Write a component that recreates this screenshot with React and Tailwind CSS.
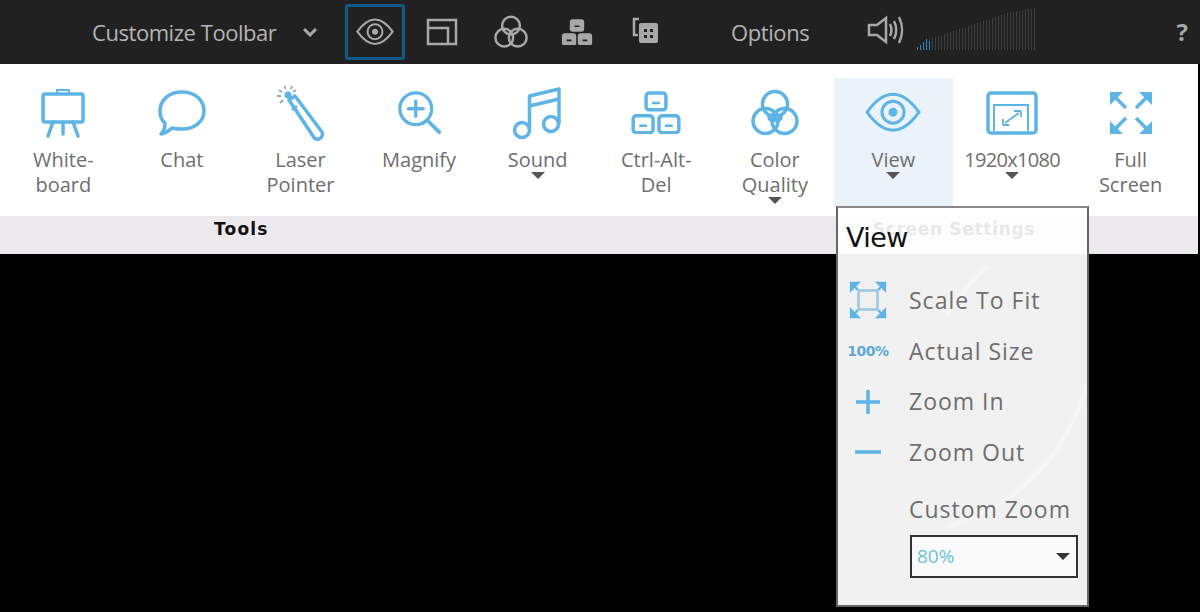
import React from 'react';

const blue = '#5fb4e6';

const Eye = ({ color, size = 56 }) => (
  <svg width={size} height={size * 0.72} viewBox="0 0 56 40" fill="none" stroke={color} strokeWidth="3">
    <path d="M2 20 C12 6 20 2 28 2 C36 2 44 6 54 20 C44 34 36 38 28 38 C20 38 12 34 2 20 Z" />
    <circle cx="28" cy="20" r="11" />
    <circle cx="28" cy="20" r="4.5" fill={color} stroke="none" />
  </svg>
);

const Circles = ({ color, size = 48, fill }) => (
  <svg width={size} height={size} viewBox="0 0 48 48" fill="none" stroke={color} strokeWidth="3.5">
    {fill && <path d="M24 22 L32 27 L31 31 C27 34 21 34 17 31 L16 27 Z" fill={color} stroke="none" />}
    <circle cx="24" cy="15" r="12.5" />
    <circle cx="14.5" cy="32" r="12.5" />
    <circle cx="33.5" cy="32" r="12.5" />
  </svg>
);

const Keys = ({ color, w = 52, solid }) => (
  <svg width={w} height={w * 0.84} viewBox="0 0 52 44" fill={solid ? color : 'none'} stroke={color} strokeWidth="3.5">
    <rect x="16" y="2" width="20" height="17" rx="3" />
    <rect x="3" y="25" width="20" height="17" rx="3" />
    <rect x="29" y="25" width="20" height="17" rx="3" />
    <path d="M22 12h8M9 35h8M35 35h8" stroke={solid ? '#212121' : color} strokeWidth="2.5" />
  </svg>
);

const Whiteboard = () => (
  <svg width="46" height="50" viewBox="0 0 46 50" fill="none" stroke={blue} strokeWidth="3.5" strokeLinecap="round" strokeLinejoin="round">
    <path d="M17 5V2h12v3" strokeWidth="2" />
    <rect x="3" y="6" width="40" height="28" rx="2" />
    <path d="M13 34 L8 48M33 34 L38 48M23 34V46" />
  </svg>
);

const Chat = () => (
  <svg width="50" height="48" viewBox="0 0 50 48" fill="none" stroke={blue} strokeWidth="3.5" strokeLinejoin="round">
    <path d="M25 3 C38 3 47 11 47 22 C47 33 37 40 25 40 C21 40 18 40 15 39 C12 42 8 44 4 45 C7 42 8 38 8 34 C4 31 3 27 3 22 C3 11 12 3 25 3 Z" />
  </svg>
);

const Laser = () => (
  <svg width="50" height="56" viewBox="0 0 50 56" fill="none" stroke={blue} strokeWidth="3.5" strokeLinejoin="round">
    <path d="M14 15 L20 11 L47 47 C48 50 47 53 44 54 C41 55 39 53 38 51 Z" />
    <path d="M22 21 L17 25" strokeWidth="2.5" />
    <circle cx="13" cy="10" r="3.5" fill={blue} stroke="none" />
    <path d="M10 1v3M17 1l-1 3M4 5l3 2M2 11h4M5 18l3-3M21 5l-3 2" stroke="#9aa5ad" strokeWidth="1.8" />
  </svg>
);

const Magnify = () => (
  <svg width="45" height="45" viewBox="0 0 48 48" fill="none" stroke={blue} strokeWidth="3.5" strokeLinecap="round">
    <circle cx="20" cy="20" r="17" />
    <path d="M20 12v16M12 20h16" />
    <path d="M32 32 L45 45" strokeWidth="4" />
  </svg>
);

const Music = () => (
  <svg width="52" height="54" viewBox="0 0 52 54" fill="none" stroke={blue} strokeWidth="3.5" strokeLinejoin="round">
    <circle cx="10" cy="44" r="7.5" />
    <circle cx="39" cy="38" r="7.5" />
    <path d="M17.5 44 V10 L47 3 V38" />
    <path d="M17.5 20 L47 13" />
  </svg>
);

const Resolution = () => (
  <svg width="52" height="44" viewBox="0 0 52 44" fill="none" stroke={blue} strokeWidth="3.5">
    <rect x="2" y="2" width="48" height="40" rx="3" />
    <path d="M8 40V14h34v26" strokeWidth="2" />
    <path d="M17 34h6M17 34v-6M35 20h-7M35 20v6M19 32l14-10" strokeWidth="1.8" />
  </svg>
);

// four corner arrows, used for full screen and scale to fit
const Corners = ({ size = 44, box }) => (
  <svg width={size} height={size} viewBox="0 0 44 44" fill={blue} stroke={blue} strokeWidth="3.5">
    <path d="M1 1h13l-13 13zM43 1v13l-13-13zM1 43v-13l13 13zM43 43h-13l13-13z" stroke="none" />
    {!box && <path d="M6 6l11 11M38 6l-11 11M6 38l11-11M38 38l-11-11" fill="none" />}
    {box && <path d="M5 5l7 7M39 5l-7 7M5 39l7-7M39 39l-7-7" fill="none" strokeWidth="2.5" />}
    {box && <rect x="11" y="11" width="22" height="22" fill="none" stroke="#9cc9e4" strokeWidth="3" />}
  </svg>
);

const Caret = ({ className = 'border-t-[#555]' }) => (
  <div className={`w-0 h-0 border-x-[7px] border-x-transparent border-t-[7px] ${className}`} />
);

const tools = [
  { icon: <Whiteboard />, label: ['White-', 'board'] },
  { icon: <Chat />, label: ['Chat'] },
  { icon: <Laser />, label: ['Laser', 'Pointer'] },
  { icon: <Magnify />, label: ['Magnify'] },
  { icon: <Music />, label: ['Sound'], caret: true },
  { icon: <Keys color={blue} />, label: ['Ctrl-Alt-', 'Del'] },
  { icon: <Circles color={blue} fill />, label: ['Color', 'Quality'], caret: true },
  { icon: <Eye color={blue} />, label: ['View'], caret: true, active: true },
  { icon: <Resolution />, label: ['1920x1080'], caret: true, narrow: true },
  { icon: <Corners />, label: ['Full', 'Screen'] },
];

const volumeBars = [3, 5, 8, 11, 9, 12, 13, 14, 15, 16, 17, 18, 19, 20, 21, 22, 23, 24, 25, 26, 27, 28, 29, 30, 31, 32, 33, 34, 35, 36, 37, 38, 38, 39, 39, 40, 40, 41, 41, 42];

const TopBar = () => (
  <div className="h-[64px] bg-[#212121] flex items-center text-[#b4b4b4] text-[22px] shrink-0">
    <span className="ml-[92px] w-[185px] whitespace-nowrap tracking-[-0.45px]">Customize Toolbar</span>
    <svg className="ml-[26px]" width="14" height="9" viewBox="0 0 14 9" fill="none" stroke="#a8a8a8" strokeWidth="3">
      <path d="M1 1l6 6 6-6" />
    </svg>
    <div className="ml-[28px] w-[60px] h-[56px] border-[3px] border-[#0f5a86] rounded-[3px] flex items-center justify-center">
      <Eye color="#a8a8a8" size={38} />
    </div>
    <svg className="ml-[21px]" width="32" height="28" viewBox="0 0 32 28" fill="none" stroke="#a8a8a8" strokeWidth="2.5">
      <rect x="2" y="2" width="28" height="24" />
      <path d="M2 10h20v16" />
    </svg>
    <div className="ml-[36px]"><Circles color="#a8a8a8" size={34} /></div>
    <div className="ml-[33px]"><Keys color="#a8a8a8" w={32} solid /></div>
    <svg className="ml-[39px] -mt-1" width="26" height="26" viewBox="0 0 26 26" fill="none">
      <path d="M7 2H2v16h4" stroke="#a8a8a8" strokeWidth="2.5" />
      <rect x="7" y="6" width="19" height="20" rx="2" fill="#a8a8a8" />
      <path d="M12 12h3v3h-3zM18 12h3v3h-3zM12 18h3v3h-3zM18 18h3v3h-3z" fill="#212121" />
    </svg>
    <span className="ml-[73px] w-[80px] tracking-[-0.4px]">Options</span>
    <svg className="ml-[56px] -mt-1" width="38" height="32" viewBox="0 0 38 32" fill="none" stroke="#a8a8a8" strokeWidth="2.5">
      <path d="M2 11h8l9-7v24l-9-7H2z" />
      <path d="M23 10c2 4 2 8 0 12M27 7c3 6 3 12 0 18M32 3c4 8 4 18 0 26" />
    </svg>
    <div className="ml-[12px] -mt-[6px] h-[42px] flex items-end gap-[2px]">
      {volumeBars.map((h, i) => (
        <div key={i} className={i < 5 ? 'w-[1px] bg-[#2f86c5]' : 'w-[1px] bg-[#3e3e3e]'} style={{ height: h }} />
      ))}
    </div>
    <span className="ml-auto mr-[12px] font-bold text-[24px] text-[#a8a8a8]">?</span>
  </div>
);

const Ribbon = () => (
  <div className="shrink-0 mr-[2px]">
    <div className="h-[152px] bg-white flex pl-[4px] pt-[14px]">
      {tools.map((t) => (
        <div key={t.label[0]} className={`w-[118.6px] h-[129px] flex flex-col items-center ${t.active ? 'bg-[#eaf3fa]' : ''}`}>
          <div className="h-[69px] flex items-center justify-center">{t.icon}</div>
          <div className={`text-[20px] leading-[25px] text-[#6e6e6e] text-center ${t.narrow ? 'tracking-[-0.7px]' : ''}`}>
            {t.label.map((l) => <div key={l}>{l}</div>)}
          </div>
          {t.caret && <Caret />}
        </div>
      ))}
    </div>
    <div className="h-[38px] bg-[#ebe9eb] flex font-['DejaVu_Sans'] font-bold text-[17px] text-[#111] leading-[26px] tracking-[1.2px]">
      <span className="ml-[214px]">Tools</span>
      <span className="ml-[604px] whitespace-nowrap tracking-[0.7px]">Screen Settings</span>
    </div>
  </div>
);

const MenuRow = ({ icon, label }) => (
  <div className="h-[50.7px] flex items-center">
    <div className="w-[60px] flex justify-center">{icon}</div>
    <span className="ml-[11px]">{label}</span>
  </div>
);

const ViewMenu = () => (
  <div className="absolute left-[836px] top-[206px] w-[253px] h-[401px] border-2 border-[#666] border-t-[#888] flex flex-col text-[23px] text-[#6e6e6e] tracking-[1px]">
    <div className="h-[46px] bg-white/90 pl-[8px] pt-[13px] text-[27px] leading-[34px] text-[#111] font-['DejaVu_Sans'] shrink-0 tracking-[-0.6px]">View</div>
    <div className="relative flex-1 flex flex-col bg-[#f1f1f1] overflow-hidden">
      <svg className="absolute inset-0" width="249" height="351" viewBox="0 0 249 351" fill="none" stroke="#f5f5f5" strokeWidth="4">
        <path d="M249 130 C228 205 175 255 110 272" />
        <path d="M150 12 C130 30 118 48 108 62" />
      </svg>
      <div className="relative pt-[21px]">
        <MenuRow icon={<Corners size={38} box />} label="Scale To Fit" />
        <MenuRow icon={<span className="text-[14px] font-bold text-[#5fa9d6] font-['DejaVu_Sans'] tracking-[-0.5px]">100%</span>} label="Actual Size" />
        <MenuRow icon={<svg width="26" height="26" viewBox="0 0 26 26" stroke={blue} strokeWidth="3.5"><path d="M13 1v24M1 13h24" /></svg>} label="Zoom In" />
        <MenuRow icon={<svg width="26" height="6" viewBox="0 0 26 6" stroke={blue} strokeWidth="3.5"><path d="M0 3h26" /></svg>} label="Zoom Out" />
      </div>
      <div className="relative ml-[71px] mt-[15px] leading-[32px]">Custom Zoom</div>
      <div className="relative ml-[72px] mt-[10px] w-[168px] h-[43px] border-2 border-[#333] bg-[#fafafa] flex items-center justify-between pl-[5px] pr-[6px] text-[19px] text-[#6cc0d8] tracking-normal">
        <span>80%</span>
        <Caret className="border-t-[#333]" />
      </div>
    </div>
  </div>
);

export default function App() {
  return (
    <div className="relative w-[1200px] h-[612px] bg-black overflow-hidden font-['Open_Sans',_sans-serif]">
      <TopBar />
      <Ribbon />
      <ViewMenu />
    </div>
  );
}
